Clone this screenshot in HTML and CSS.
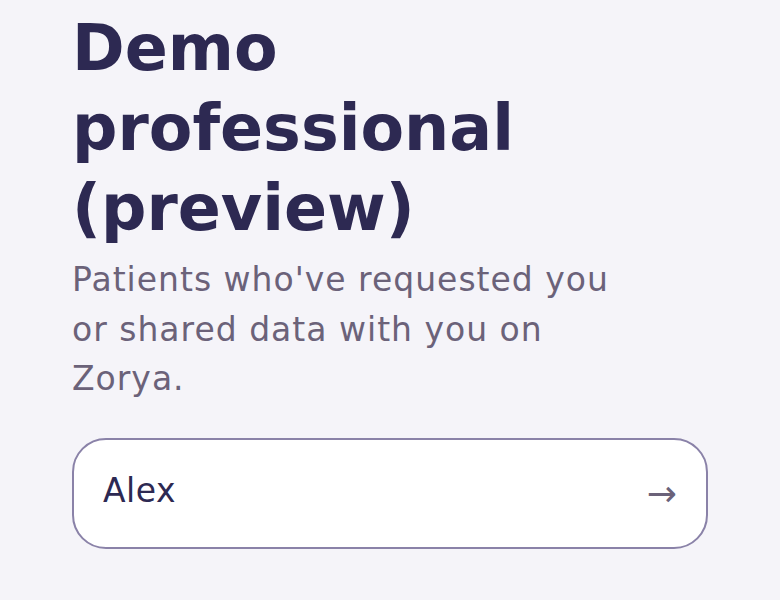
FILE: index.html
```html
<!DOCTYPE html>
<html lang="en">
<head>
<meta charset="utf-8">
<title>Demo professional (preview)</title>
<link rel="stylesheet" href="styles.css">
</head>
<body>
<main class="page">
  <h1 class="title">Demo professional (preview)</h1>
  <p class="lead">Patients who've requested you or shared data with you on Zorya.</p>
  <a class="patient-card" href="#">
    <span class="patient-name">Alex</span>
    <span class="patient-arrow">→</span>
  </a>
</main>
</body>
</html>
```

FILE: styles.css
```css
html, body {
  margin: 0;
  padding: 0;
  background: #f5f4f9;
}
body {
  font-family: "DejaVu Sans", sans-serif;
}
.page {
  padding: 8px 72px 0 72px;
  display: flex;
  flex-direction: column;
}
.title {
  margin: 0;
  font-size: 63.5px;
  line-height: 80px;
  font-weight: 700;
  color: #2d2952;
  max-width: 500px;
}
.lead {
  margin: 7px 0 0;
  font-size: 33px;
  line-height: 49.5px;
  letter-spacing: 1px;
  color: #6b6279;
  max-width: 580px;
}
.patient-card {
  margin-top: 34px;
  box-sizing: border-box;
  height: 111px;
  display: flex;
  align-items: center;
  justify-content: space-between;
  padding: 0 29px 0 29px;
  background: #ffffff;
  border: 2px solid #8a82a8;
  border-radius: 34px;
  text-decoration: none;
}
.patient-name {
  font-size: 33px;
  letter-spacing: 0.5px;
  color: #2d2952;
  margin-top: -6px;
}
.patient-arrow {
  font-size: 36px;
  color: #6b6279;
}
```
